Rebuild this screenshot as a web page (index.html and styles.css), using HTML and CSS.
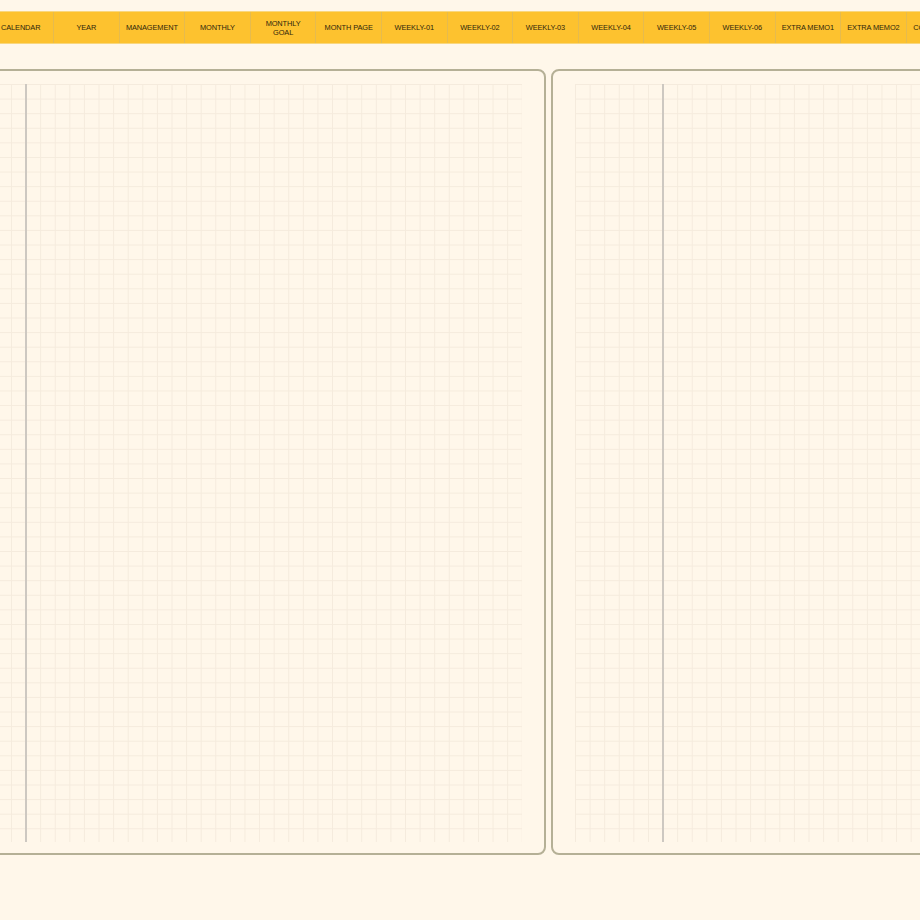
FILE: index.html
```html
<!DOCTYPE html>
<html>
<head>
<meta charset="utf-8">
<link rel="stylesheet" href="styles.css">
</head>
<body>
<nav class="tabs">
  <div class="tab">CALENDAR</div>
  <div class="tab">YEAR</div>
  <div class="tab">MANAGEMENT</div>
  <div class="tab">MONTHLY</div>
  <div class="tab two">MONTHLY<br>GOAL</div>
  <div class="tab">MONTH PAGE</div>
  <div class="tab">WEEKLY-01</div>
  <div class="tab">WEEKLY-02</div>
  <div class="tab">WEEKLY-03</div>
  <div class="tab">WEEKLY-04</div>
  <div class="tab">WEEKLY-05</div>
  <div class="tab">WEEKLY-06</div>
  <div class="tab">EXTRA MEMO1</div>
  <div class="tab">EXTRA MEMO2</div>
  <div class="tab">CONTACT LIST</div>
  <div class="tab">INDEX</div>
</nav>
<main class="spread">
  <section class="page">
    <div class="grid"><div class="margin"></div></div>
  </section>
  <section class="page">
    <div class="grid"><div class="margin"></div></div>
  </section>
</main>
</body>
</html>
```
FILE: styles.css
```css
html, body {
  margin: 0;
  padding: 0;
  background: #fff7ea;
  overflow: hidden;
  width: 920px;
  height: 920px;
}
.tabs {
  display: flex;
  margin-top: 11px;
  margin-left: -11.6px;
  height: 31px;
  background: #fdc22f;
  border-top: 1px solid #f9d77e;
  border-bottom: 1px solid #f9d77e;
  width: 1100px;
}
.tab {
  flex: 0 0 65.6px;
  box-sizing: border-box;
  border-right: 1px solid #e6bb4e;
  display: flex;
  align-items: center;
  justify-content: center;
  text-align: center;
  font-family: "Liberation Sans", Arial, sans-serif;
  font-size: 7.4px;
  line-height: 9px;
  color: #2e250c;
  white-space: nowrap;
  letter-spacing: -0.1px;
}
.spread {
  display: flex;
  gap: 5px;
  margin-top: 25px;
  margin-left: -86px;
}
.page {
  flex: 0 0 630px;
  height: 786px;
  box-sizing: border-box;
  border: 2px solid #b5b096;
  border-radius: 8px;
  padding: 13px 22px;
}
.grid {
  position: relative;
  width: 584px;
  height: 758px;
  background-image:
    linear-gradient(to right, #f5ebdd 1px, transparent 1px),
    linear-gradient(to bottom, #f5ebdd 1px, transparent 1px);
  background-size: 14.6px 14.6px;
}
.margin {
  position: absolute;
  left: 87px;
  top: 0;
  bottom: 0;
  width: 1.5px;
  background: #cdc8c1;
}
```
